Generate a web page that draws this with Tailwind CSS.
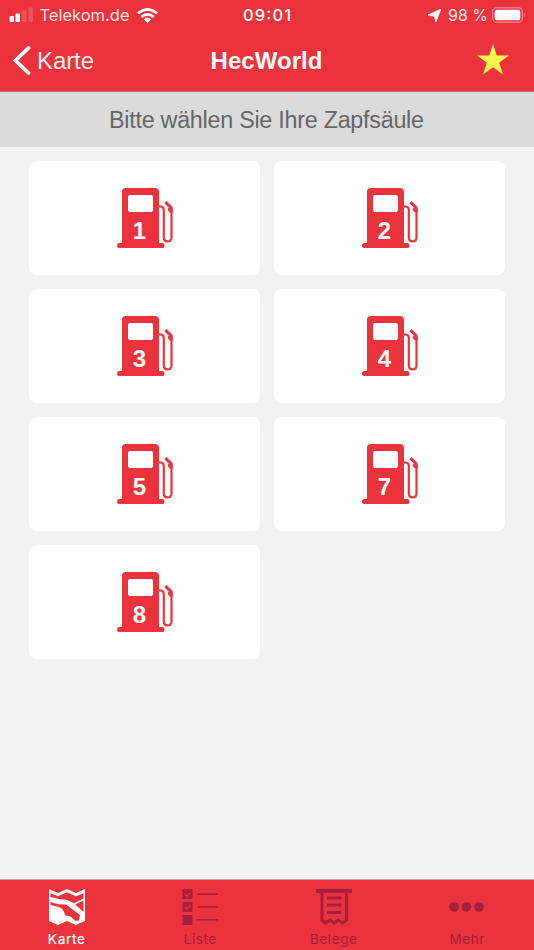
<!DOCTYPE html>
<html lang="de">
<head>
    <meta charset="UTF-8">
    <meta name="viewport" content="width=device-width, initial-scale=1.0">
    <title>HecWorld</title>
    <script src="https://cdn.jsdelivr.net/npm/@tailwindcss/browser@4"></script>
</head>
<body class="bg-[#f2f2f2] font-['Liberation_Sans',sans-serif]">
    <!-- Shared pump icon -->
    <svg class="hidden">
        <symbol id="pump" viewBox="0 0 56 60">
            <path fill="#eb333d" fill-rule="evenodd" d="M9 0H38Q42 0 42 4V55H45.500Q47.500 55 47.500 57.500T45.500 60H2Q0 60 0 57.500T2 55H5V4Q5 0 9 0ZM13 7Q11 7 11 9V22Q11 24 13 24H34Q36 24 36 22V9Q36 7 34 7Z"/>
            <path fill="none" stroke="#eb333d" stroke-width="2.200" d="M42 18.500H43.500Q46.800 18.500 46.800 22V49.500Q46.800 53.400 50.600 53.400T54.500 49.500V20.500L48.500 14.800"/>
            <path fill="#eb333d" d="M47.300 15.200L49.500 13L55.600 19V24.500H53L50.500 22L52 18.800Z"/>
        </symbol>
    </svg>

    <div class="w-[534px] h-[950px] flex flex-col overflow-hidden">
        <!-- Header -->
        <header class="h-[92px] shrink-0 bg-[#eb333d] text-white border-b border-[#d2686e]">
            <div class="h-[30px] grid grid-cols-3 items-center pl-[9px] pr-2">
                <div class="flex items-center">
                    <svg class="w-6 h-4" viewBox="0 0 24 16" fill="#fff">
                        <rect x="0.500" y="9" width="4.500" height="6" rx="1"/>
                        <rect x="6.500" y="6.500" width="4.500" height="8.500" rx="1"/>
                        <rect x="13" y="3.500" width="4.500" height="11.500" rx="1" opacity=".15"/>
                        <rect x="19.500" y="0.500" width="4.500" height="14.500" rx="1" opacity=".15"/>
                    </svg>
                    <svg class="w-[92px] h-5 ml-[6px]" viewBox="0 0 92 20">
                        <text x="0.500" y="16" font-family="Inter" font-size="16.500" fill="#fff" fill-opacity=".9" textLength="90">Telekom.de</text>
                    </svg>
                    <svg class="w-[21px] h-[15px] ml-[6px]" viewBox="0 0 21 15" fill="none" stroke="#fff" stroke-width="2.600">
                        <path d="M1 5.300Q10.500 -2.700 20 5.300M4.300 8.900Q10.500 3.700 16.700 8.900"/>
                        <path fill="#fff" stroke="none" d="M6.800 11.200Q10.500 8 14.200 11.200L10.500 15Z"/>
                    </svg>
                </div>
                <svg class="w-12 h-5 justify-self-center" viewBox="0 0 48 20">
                    <text x="0" y="16" font-family="Inter" font-size="16.500" font-weight="500" fill="#fff" textLength="48">09:01</text>
                </svg>
                <div class="flex items-center justify-end">
                    <svg class="w-[13px] h-[13px]" viewBox="0 0 13 13" fill="#fff"><path d="M13 0L7.800 13L6.500 7.300L0 6Z" stroke="#fff" stroke-width=".8" stroke-linejoin="round"/></svg>
                    <svg class="w-[41px] h-5 ml-[7px]" viewBox="0 0 41 20">
                        <text x="0" y="16" font-family="Inter" font-size="16" fill="#fff" fill-opacity=".9" textLength="40">98 %</text>
                    </svg>
                    <svg class="w-[34px] h-4 ml-[3px]" viewBox="0 0 34 16">
                        <rect x="0.700" y="0.700" width="29.600" height="14.600" rx="4" fill="none" stroke="#fff" stroke-opacity=".35" stroke-width="1.400"/>
                        <rect x="2.700" y="2.700" width="25.600" height="10.600" rx="2.200" fill="#fff"/>
                        <path fill="#fff" fill-opacity=".4" d="M31.800 5.500Q34 8 31.800 10.500Z"/>
                    </svg>
                </div>
            </div>
            <div class="h-[61px] grid grid-cols-3 items-center px-[13px]">
                <div class="flex items-center">
                    <svg class="w-[18px] h-[30px]" viewBox="0 0 18 30"><path d="M15.500 2L2.500 14.500L15.500 27" fill="none" stroke="#fff" stroke-width="3.800" stroke-linecap="round"/></svg>
                    <svg class="w-[60px] h-8 ml-[6px]" viewBox="0 0 60 32">
                        <text x="0" y="23.500" font-size="24" fill="#fff" fill-opacity=".95" textLength="57">Karte</text>
                    </svg>
                </div>
                <svg class="w-[114px] h-8 justify-self-center" viewBox="0 0 114 32">
                    <text x="0.500" y="23.500" font-size="24" font-weight="bold" fill="#fff" textLength="112">HecWorld</text>
                </svg>
                <svg class="w-8 h-[31px] justify-self-end mr-[12px] mb-[2px]" viewBox="0 0 32 31"><path fill="#fdf550" d="M16 0L19.800 11.500H32L22.200 18.800L26 30.500L16 23.300L6 30.500L9.800 18.800L0 11.500H12.200Z"/></svg>
            </div>
        </header>

        <div class="h-[55px] shrink-0 bg-[#dbdbdb] flex items-center justify-center">
            <svg class="w-[316px] h-9" viewBox="0 0 316 36">
                <text x="0" y="25.500" font-size="23.300" fill="#666" textLength="315">Bitte wählen Sie Ihre Zapfsäule</text>
            </svg>
        </div>

        <!-- Pump selection -->
        <main class="flex-1 px-[29px] pt-[14px]">
            <div class="grid grid-cols-2 gap-x-[14px] gap-y-[14px] text-[24px] font-bold">
                <button class="h-[114px] rounded-lg bg-white flex items-center justify-center">
                    <svg class="w-14 h-[60px]" viewBox="0 0 56 60"><use href="#pump"/><text x="22.500" y="51" fill="#fff" text-anchor="middle">1</text></svg>
                </button>
                <button class="h-[114px] rounded-lg bg-white flex items-center justify-center">
                    <svg class="w-14 h-[60px]" viewBox="0 0 56 60"><use href="#pump"/><text x="22.500" y="51" fill="#fff" text-anchor="middle">2</text></svg>
                </button>
                <button class="h-[114px] rounded-lg bg-white flex items-center justify-center">
                    <svg class="w-14 h-[60px]" viewBox="0 0 56 60"><use href="#pump"/><text x="22.500" y="51" fill="#fff" text-anchor="middle">3</text></svg>
                </button>
                <button class="h-[114px] rounded-lg bg-white flex items-center justify-center">
                    <svg class="w-14 h-[60px]" viewBox="0 0 56 60"><use href="#pump"/><text x="22.500" y="51" fill="#fff" text-anchor="middle">4</text></svg>
                </button>
                <button class="h-[114px] rounded-lg bg-white flex items-center justify-center">
                    <svg class="w-14 h-[60px]" viewBox="0 0 56 60"><use href="#pump"/><text x="22.500" y="51" fill="#fff" text-anchor="middle">5</text></svg>
                </button>
                <button class="h-[114px] rounded-lg bg-white flex items-center justify-center">
                    <svg class="w-14 h-[60px]" viewBox="0 0 56 60"><use href="#pump"/><text x="22.500" y="51" fill="#fff" text-anchor="middle">7</text></svg>
                </button>
                <button class="h-[114px] rounded-lg bg-white flex items-center justify-center">
                    <svg class="w-14 h-[60px]" viewBox="0 0 56 60"><use href="#pump"/><text x="22.500" y="51" fill="#fff" text-anchor="middle">8</text></svg>
                </button>
            </div>
        </main>

        <!-- Tab bar -->
        <nav class="h-[71px] shrink-0 bg-[#eb333d] border-t border-[#b5a5a6] grid grid-cols-4 font-['Inter',sans-serif] text-[13.5px] leading-5 text-[#a71f38]">
            <a class="flex flex-col items-center pt-[9px] text-white">
                <svg class="w-9 h-9" viewBox="0 0 36 36">
                    <path fill="#fff" d="M0 0L9 4L18 0L27 4L36 0V32L27 36L18 32L9 36L0 32Z"/>
                    <path fill="#eb333d" d="M1.500 4.200L9 7.300L18 3.300L27 7.300L34.500 4.200V9.500L25 14.200L17.500 10.800L11 10.300L1.500 8Z"/>
                    <path fill="#eb333d" d="M1.500 13L9 15.200L17 15.500L23 20L31 26L30 31.500L26 31.800L21.500 27.500L16 26.200Q15 19.500 9.500 18L1.500 16Z"/>
                    <path fill="#eb333d" d="M26.300 15.500L34.500 11.500V23Z"/>
                </svg>
                <span class="mt-[4px] tracking-[0.6px] font-medium">Karte</span>
            </a>
            <a class="flex flex-col items-center pt-[9px]">
                <svg class="w-9 h-9" viewBox="0 0 36 36" fill="#a71f38">
                    <path d="M0.500 0H10.500V10H0.500ZM0.500 13H10.500V23H0.500ZM0.500 26H10.500V36H0.500Z"/>
                    <path d="M15 5.200H36M15 18H36M15 30.800H36" stroke="#a71f38" stroke-width="1.500"/>
                    <path d="M3 5L5 7L8.500 3.500M3 18L5 20L8.500 16.500" fill="none" stroke="#eb333d" stroke-width="1.300"/>
                </svg>
                <span class="mt-[4px] tracking-[0.6px]">Liste</span>
            </a>
            <a class="flex flex-col items-center pt-[9px]">
                <svg class="w-9 h-9" viewBox="0 0 36 36" fill="none" stroke="#a71f38" stroke-width="3">
                    <path d="M0 2H36" stroke-width="4"/>
                    <path d="M6 3V31L9.500 34L14 31L18 34L22 31L26.500 34L30.500 31V3M11 9H25.500M11 16H25.500M11 23.500H25.500"/>
                </svg>
                <span class="mt-[4px] tracking-[0.6px]">Belege</span>
            </a>
            <a class="flex flex-col items-center pt-[9px]">
                <svg class="w-9 h-9" viewBox="0 0 36 36" fill="#a71f38"><circle cx="5" cy="18" r="4.800"/><circle cx="17.500" cy="18" r="4.800"/><circle cx="30" cy="18" r="4.800"/></svg>
                <span class="mt-[4px] tracking-[0.6px]">Mehr</span>
            </a>
        </nav>
    </div>
</body>
</html>
